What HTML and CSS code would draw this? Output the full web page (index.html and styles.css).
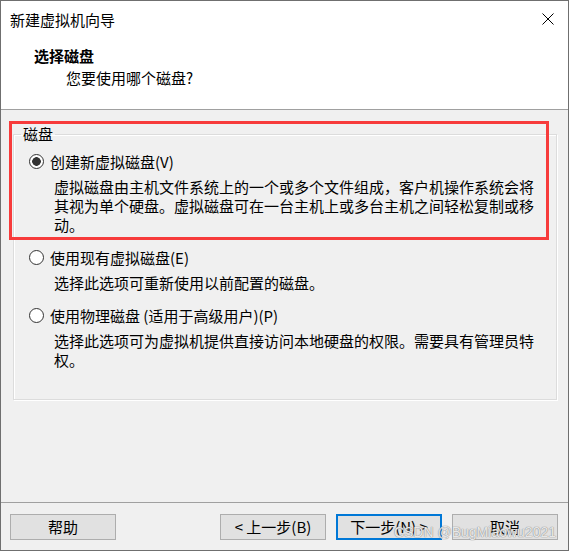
FILE: index.html
```html
<!DOCTYPE html>
<html>
  <head>
    <meta charset="utf-8">
    <title>新建虚拟机向导</title>
    <link rel="stylesheet" href="styles.css">
  </head>
  <body>
    <div class="window">
      <div class="titlebar">
        <span class="title">新建虚拟机向导</span>
        <svg class="close" width="12" height="12" viewBox="0 0 12 12">
          <path d="M0.5 0.5 L11.5 11.5 M11.5 0.5 L0.5 11.5" stroke="#000" stroke-width="1" fill="none"/>
        </svg>
      </div>
      <div class="header">
        <h3>选择磁盘</h3>
        <p>您要使用哪个磁盘?</p>
      </div>
      <div class="content">
        <fieldset class="group">
          <legend>磁盘</legend>
          <label class="option"><input type="radio" name="disk" checked>创建新虚拟磁盘(V)</label>
          <p class="desc">虚拟磁盘由主机文件系统上的一个或多个文件组成，客户机操作系统会将其视为单个硬盘。虚拟磁盘可在一台主机上或多台主机之间轻松复制或移动。</p>
          <label class="option"><input type="radio" name="disk">使用现有虚拟磁盘(E)</label>
          <p class="desc">选择此选项可重新使用以前配置的磁盘。</p>
          <label class="option"><input type="radio" name="disk">使用物理磁盘 (适用于高级用户)(P)</label>
          <p class="desc">选择此选项可为虚拟机提供直接访问本地硬盘的权限。需要具有管理员特权。</p>
        </fieldset>
      </div>
      <div class="footer">
        <button>帮助</button>
        <span class="spacer"></span>
        <button>&lt; 上一步(B)</button>
        <button class="default">下一步(N) &gt;</button>
        <button>取消</button>
      </div>
      <!-- annotation drawn over the dialog -->
      <div class="highlight"></div>
      <span class="watermark">CSDN @BugMiaowu2021</span>
    </div>
  </body>
</html>
```

FILE: styles.css
```css
body {
  margin: 0;
  background: #fff;
  font-family: "Noto Sans CJK SC", "Microsoft YaHei", sans-serif;
  font-size: 15px;
  color: #000;
}
.window {
  position: relative;
  width: 567px;
  height: 549px;
  border: 1px solid #6f6f6f;
  display: flex;
  flex-direction: column;
  background: #f0f0f0;
}
.titlebar {
  box-sizing: border-box;
  height: 30px;
  padding: 9px 14px 0 9px;
  background: #fff;
  display: flex;
  align-items: flex-start;
  line-height: 20px;
}
.close {
  margin-left: auto;
  margin-top: 3px;
}
.header {
  box-sizing: border-box;
  height: 79px;
  background: #fff;
  border-bottom: 1px solid #a0a0a0;
  padding-top: 15px;
}
.header h3 {
  margin: 0 0 2px 33px;
  font-size: 15px;
  font-weight: bold;
  line-height: 20px;
}
.header p {
  margin: 0 0 0 65px;
  line-height: 20px;
}
.content {
  flex: 1;
  padding: 14px 0 0 12px;
}
.group {
  box-sizing: border-box;
  width: 544px;
  height: 276px;
  margin: 0;
  padding: 8px 7px 0 7px;
  border: 1px solid #dcdcdc;
  box-shadow: inset 1px 1px 0 #fff, 1px 1px 0 #fff;
}
.group legend {
  padding: 0 2px;
  line-height: 20px;
}
.option {
  display: flex;
  align-items: center;
  margin: 14px 0 0 8px;
  line-height: 19px;
}
.option:first-of-type {
  margin-top: 0;
}
.option input {
  appearance: none;
  -webkit-appearance: none;
  box-sizing: border-box;
  width: 15px;
  height: 15px;
  margin: 0 6px 0 0;
  border: 1px solid #333;
  border-radius: 50%;
  background: #fff;
}
.option input:checked {
  background: radial-gradient(circle, #333 0 4px, #fff 4.6px);
}
.desc {
  width: 482px;
  margin: 6px 0 0 33px;
  line-height: 19px;
}
.footer {
  box-sizing: border-box;
  height: 48px;
  border-top: 1px solid #a0a0a0;
  padding: 11px 10px 0 9px;
  display: flex;
  align-items: flex-start;
  gap: 10px;
}
.spacer {
  flex: 1;
}
button {
  box-sizing: border-box;
  width: 106px;
  height: 26px;
  margin: 0;
  padding: 0;
  background: #e1e1e1;
  border: 1px solid #adadad;
  font-family: inherit;
  font-size: 15px;
  line-height: 20px;
  color: #000;
}
button.default {
  border: 2px solid #0078d7;
}
.highlight {
  position: absolute;
  left: 8px;
  top: 120px;
  width: 540px;
  height: 119px;
  box-sizing: border-box;
  border: 3px solid #f73b3b;
}
.watermark {
  position: absolute;
  right: 12px;
  bottom: 10px;
  font-family: "Liberation Sans", Arial, sans-serif;
  font-size: 14px;
  line-height: 16px;
  color: rgba(245, 245, 245, 0.9);
  text-shadow: 0 0 1px #888, 0 0 1px #888;
}
```
